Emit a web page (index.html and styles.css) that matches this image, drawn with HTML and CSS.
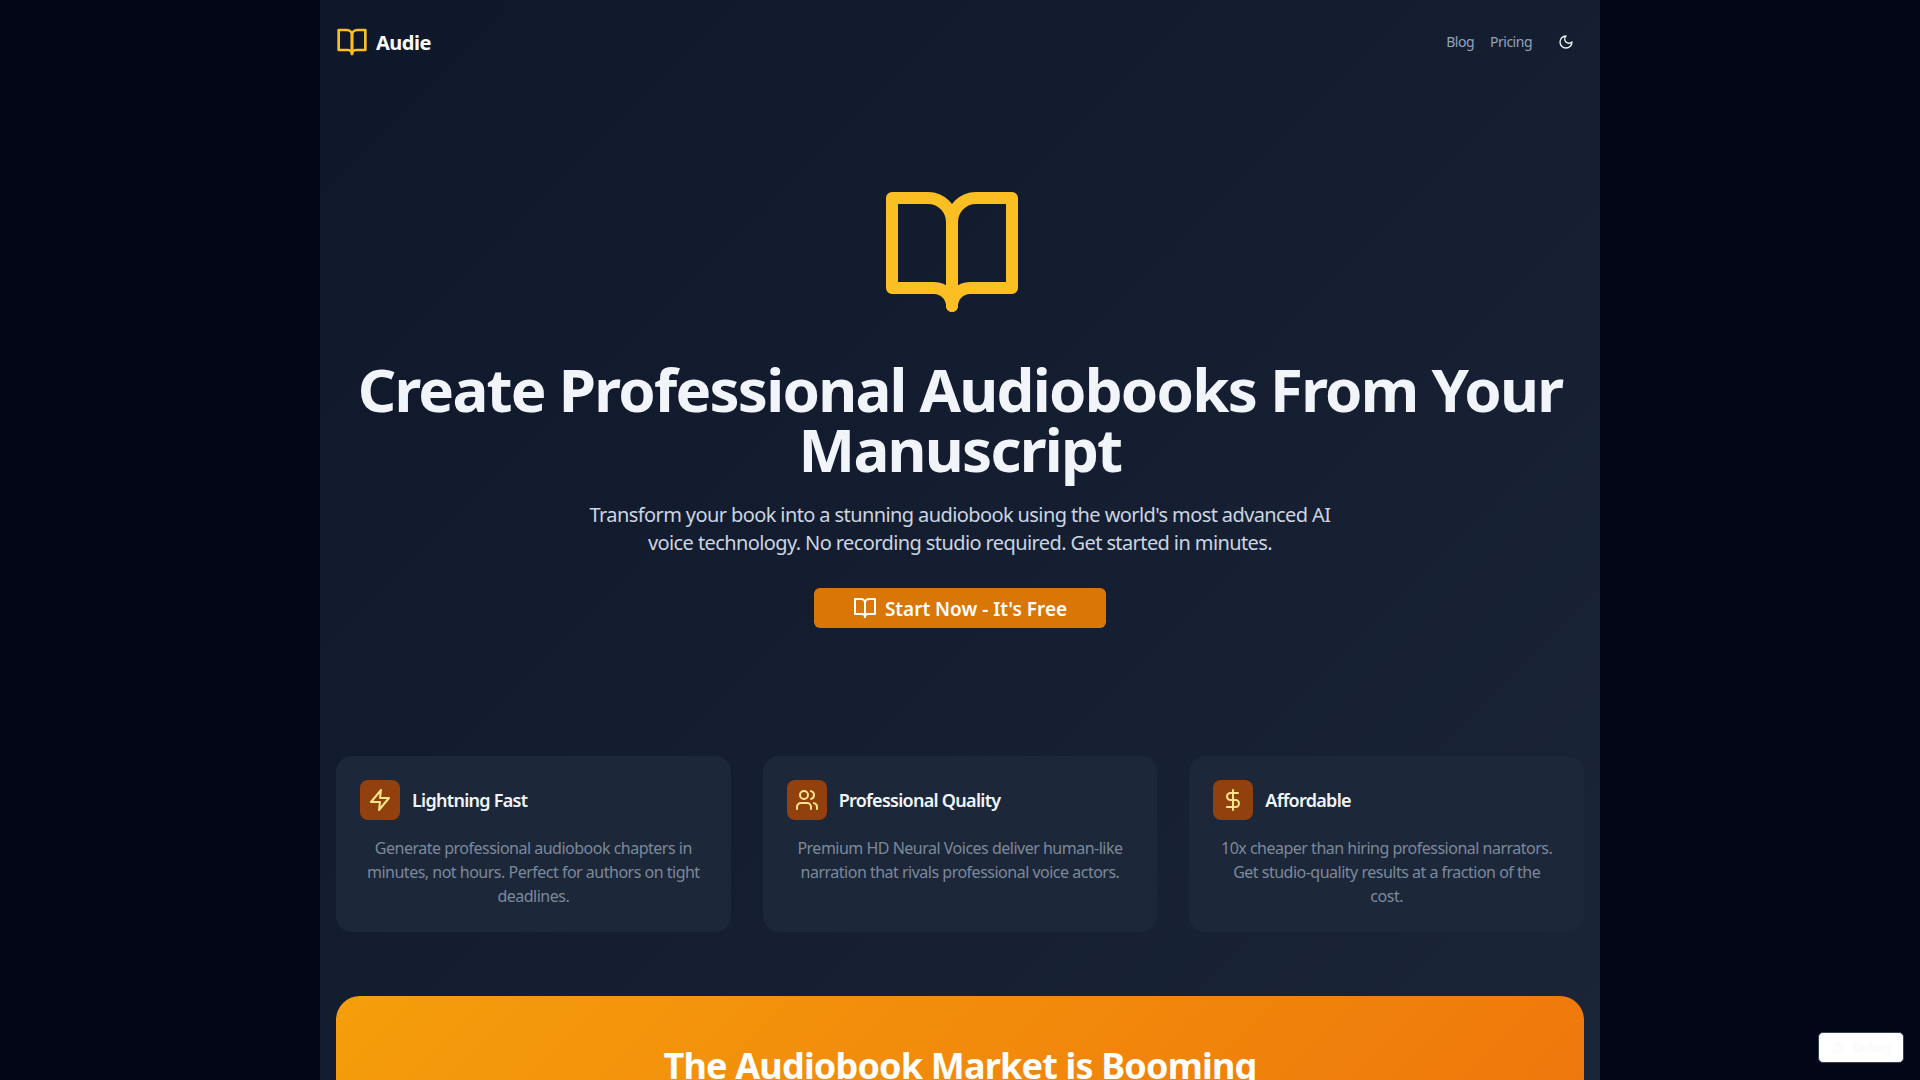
FILE: index.html
```html
<!DOCTYPE html>
<html lang="en">
<head>
<meta charset="utf-8">
<title>Audie</title>
<link rel="stylesheet" href="styles.css">
</head>
<body>
<svg class="sprite" width="0" height="0" aria-hidden="true">
  <symbol id="book" viewBox="0 0 24 24"><path d="M2 3h6a4 4 0 0 1 4 4v14a3 3 0 0 0-3-3H2z"/><path d="M22 3h-6a4 4 0 0 0-4 4v14a3 3 0 0 1 3-3h7z"/></symbol>
</svg>
<div class="page">
  <nav class="nav">
    <a class="brand"><svg class="brand-icon"><use href="#book"/></svg><span>Audie</span></a>
    <div class="nav-links">
      <a class="nav-link">Blog</a>
      <a class="nav-link">Pricing</a>
      <svg class="moon" viewBox="0 0 24 24"><path d="M12 3a6 6 0 0 0 9 9 9 9 0 1 1-9-9Z"/></svg>
    </div>
  </nav>
  <section class="hero">
    <svg class="hero-icon"><use href="#book"/></svg>
    <h1>Create Professional Audiobooks From Your Manuscript</h1>
    <p class="lead">Transform your book into a stunning audiobook using the world's most advanced AI voice technology. No recording studio required. Get started in minutes.</p>
    <a class="cta"><svg class="cta-icon"><use href="#book"/></svg><span>Start Now - It's Free</span></a>
  </section>
  <section class="cards">
    <article class="card">
      <div class="card-head">
        <span class="badge"><svg viewBox="0 0 24 24"><path d="M13 2 3 14h9l-1 8 10-12h-9l1-8z"/></svg></span>
        <h3>Lightning Fast</h3>
      </div>
      <p>Generate professional audiobook chapters in minutes, not hours. Perfect for authors on tight deadlines.</p>
    </article>
    <article class="card">
      <div class="card-head">
        <span class="badge"><svg viewBox="0 0 24 24"><path d="M16 21v-2a4 4 0 0 0-4-4H6a4 4 0 0 0-4 4v2"/><circle cx="9" cy="7" r="4"/><path d="M22 21v-2a4 4 0 0 0-3-3.87"/><path d="M16 3.13a4 4 0 0 1 0 7.75"/></svg></span>
        <h3>Professional Quality</h3>
      </div>
      <p>Premium HD Neural Voices deliver human-like narration that rivals professional voice actors.</p>
    </article>
    <article class="card">
      <div class="card-head">
        <span class="badge"><svg viewBox="0 0 24 24"><line x1="12" x2="12" y1="2" y2="22"/><path d="M17 5H9.5a3.5 3.5 0 0 0 0 7h5a3.5 3.5 0 0 1 0 7H6"/></svg></span>
        <h3>Affordable</h3>
      </div>
      <p>10x cheaper than hiring professional narrators. Get studio-quality results at a fraction of the cost.</p>
    </article>
  </section>
  <section class="market">
    <h2>The Audiobook Market is Booming</h2>
  </section>
</div>
<button class="debug"><svg viewBox="0 0 24 24"><path d="m8 2 1.88 1.88"/><path d="M14.12 3.88 16 2"/><path d="M9 7.13v-1a3 3 0 1 1 6 0v1"/><path d="M12 20c-3.3 0-6-2.7-6-6v-3a4 4 0 0 1 4-4h4a4 4 0 0 1 4 4v3c0 3.3-2.7 6-6 6"/><path d="M12 20v-9"/><path d="M6.53 9C4.6 8.8 3 7.1 3 5"/><path d="M6 13H2"/><path d="M3 21c0-2.1 1.7-3.9 3.8-4"/><path d="M20.97 5c0 2.1-1.6 3.8-3.5 4"/><path d="M22 13h-4"/><path d="M17.2 17c2.1.1 3.8 1.9 3.8 4"/></svg><span>Debug</span></button>
</body>
</html>
```
FILE: styles.css
```css
* { box-sizing: border-box; margin: 0; padding: 0; }
html { overflow: hidden; height: 100%; }
body {
  background: #020617;
  font-family: "Noto Sans", "Open Sans", sans-serif;
  color: #f1f5f9;
  height: 100%;
  overflow: hidden;
}
.sprite { display: block; height: 0; }
svg { fill: none; stroke: currentColor; stroke-width: 2; stroke-linecap: round; stroke-linejoin: round; flex: none; display: block; }
.page {
  width: 1280px;
  margin: 0 auto;
  padding: 0 16px;
  height: 1800px;
  background: linear-gradient(135deg, #0f172a, #1e293b);
}
.nav { height: 84px; display: flex; align-items: center; justify-content: space-between; }
.brand { display: flex; align-items: center; gap: 8px; font-size: 20px; font-weight: 700; color: #f8fafc; letter-spacing: -0.5px; }
.brand-icon { width: 32px; height: 32px; color: #fbbf24; }
.nav-links { display: flex; align-items: center; gap: 16px; padding-right: 10px; }
.nav-link { font-size: 14px; line-height: 18px; margin-top: -1px; color: #94a3b8; letter-spacing: -0.5px; }
.moon { width: 16px; height: 16px; color: #f1f5f9; margin-left: 10px; }
.hero { display: flex; flex-direction: column; align-items: center; padding-top: 96px; text-align: center; }
.hero-icon { width: 144px; height: 144px; color: #fbbf24; margin-right: 16px; }
h1 { margin-top: 35px; font-size: 60px; line-height: 60px; font-weight: 700; color: #f1f5f9; letter-spacing: -1.75px; }
.lead { margin-top: 22px; width: 768px; font-size: 20px; line-height: 28px; color: #cbd5e1; letter-spacing: -0.6px; }
.cta {
  margin-top: 31px;
  width: 292px;
  height: 40px;
  background: #d97706;
  border-radius: 6px;
  display: flex;
  align-items: center;
  justify-content: center;
  gap: 8px;
  font-size: 19px;
  font-weight: 600;
  color: #fff;
}
.cta span { padding-top: 2px; }
.cta-icon { width: 24px; height: 24px; }
.cards { margin-top: 128px; display: grid; grid-template-columns: repeat(3, 1fr); gap: 32px; }
.card { background: #1c2739; border-radius: 16px; padding: 24px; min-height: 176px; }
.card-head { display: flex; align-items: center; gap: 12px; margin-bottom: 16px; }
.badge { width: 40px; height: 40px; border-radius: 8px; background: #92400e; color: #fde68a; display: flex; align-items: center; justify-content: center; }
.badge svg { width: 24px; height: 24px; }
h3 { font-size: 18px; font-weight: 600; color: #f1f5f9; letter-spacing: -0.72px; }
.card p { padding: 0 5px; font-size: 16px; line-height: 24px; color: #7d899b; text-align: center; letter-spacing: -0.5px; }
.market {
  margin-top: 64px;
  border-radius: 24px;
  background: linear-gradient(135deg, #f59e0b, #ea580c) 0 0 / 100% 1200px no-repeat;
  height: 800px;
  padding-top: 50px;
  text-align: center;
}
h2 { font-size: 36px; line-height: 40px; font-weight: 700; color: #fff; letter-spacing: -0.82px; }
.debug {
  position: fixed;
  right: 16px;
  bottom: 17px;
  width: 86px;
  height: 31px;
  background: #fff;
  border: 1px solid #334155;
  border-radius: 5px;
  color: #f8fafc;
  display: flex;
  align-items: center;
  justify-content: center;
  gap: 8px;
  font: 700 12px "Noto Sans", sans-serif;
}
.debug svg { width: 14px; height: 14px; }
```
